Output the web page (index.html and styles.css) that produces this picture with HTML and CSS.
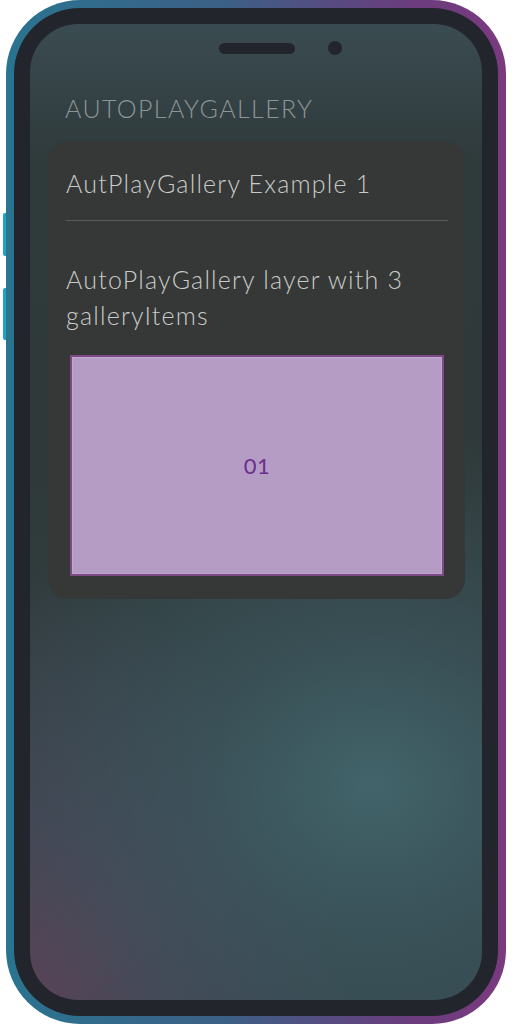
FILE: index.html
```html
<!DOCTYPE html>
<html>
<head>
<meta charset="utf-8">
<link rel="stylesheet" href="styles.css">
</head>
<body>
<div class="device">
  <div class="btn btn-a"></div>
  <div class="btn btn-b"></div>
  <div class="phone">
    <div class="frame">
      <div class="screen">
        <div class="sensors">
          <span></span>
          <span class="speaker"></span>
          <span class="camera"></span>
        </div>
        <h1 class="heading">AUTOPLAYGALLERY</h1>
        <section class="card">
          <h2 class="card-title">AutPlayGallery Example 1</h2>
          <hr class="divider">
          <p class="card-text">AutoPlayGallery layer with 3 galleryItems</p>
          <div class="gallery">
            <span class="gallery-label">01</span>
          </div>
        </section>
      </div>
    </div>
  </div>
</div>
</body>
</html>
```

FILE: styles.css
```css
* { box-sizing: border-box; }
html, body { margin: 0; padding: 0; background: #ffffff; }
body { width: 512px; height: 1024px; overflow: hidden; font-family: "Lato", "Noto Sans", sans-serif; }

.device { position: relative; width: 512px; height: 1024px; padding-left: 6px; }

.btn { position: absolute; left: 3px; width: 4px; background: #1ea2c9; border-radius: 2px 0 0 2px; }
.btn-a { top: 213px; height: 43px; }
.btn-b { top: 288px; height: 52px; }

.phone {
  position: relative;
  width: 500px;
  height: 1024px;
  padding: 8px;
  border-radius: 74px;
  background: linear-gradient(90deg, #2a7490 0%, #3d5f86 45%, #6a3d7e 80%, #7a3a7e 100%);
}

.frame {
  height: 100%;
  padding: 16px;
  border-radius: 66px;
  background: #22252c;
}

.screen {
  height: 100%;
  border-radius: 48px;
  padding: 17px 17px 0 18px;
  overflow: hidden;
  background:
    radial-gradient(ellipse 420px 360px at 76% 78%, rgba(66,102,108,0.95) 0%, rgba(62,92,100,0.6) 40%, rgba(50,64,66,0) 100%),
    radial-gradient(ellipse 320px 420px at 0% 100%, rgba(92,66,88,0.95) 0%, rgba(80,70,92,0.55) 45%, rgba(60,70,80,0) 100%),
    linear-gradient(180deg, #3a4b51 0%, #2f3a3b 14%, #2f3939 45%, #34444a 100%);
}

.sensors {
  display: grid;
  grid-template-columns: 1fr 76px 1fr;
  align-items: center;
  height: 14px;
}
.speaker { height: 11px; border-radius: 6px; background: #22252c; }
.camera { width: 14px; height: 14px; border-radius: 50%; background: #22252c; margin-left: 33px; }

.heading {
  margin: 38px 0 0 17px;
  font-size: 25px;
  line-height: 30px;
  font-weight: 300;
  color: #8d9597;
  letter-spacing: 1.4px;
}

.card {
  margin-top: 18px;
  background: #353837;
  border-radius: 20px;
  padding: 27px 17px 23px 18px;
}

.card-title {
  margin: 0;
  font-size: 25px;
  line-height: 30px;
  font-weight: 300;
  color: #c9cbca;
  letter-spacing: 1.2px;
}

.divider {
  margin: 22px 0 0 0;
  border: 0;
  height: 1px;
  background: #575b5a;
}

.card-text {
  margin: 40px 0 0 0;
  font-size: 25px;
  line-height: 36px;
  font-weight: 300;
  color: #c9cbca;
  letter-spacing: 1.2px;
}

.gallery {
  margin: 22px 4px 0 4px;
  height: 221px;
  border: 2px solid #7e4a86;
  box-shadow: inset 0 0 0 1px #c0a7cd;
  background: #b59cc5;
  display: flex;
  align-items: center;
  justify-content: center;
}

.gallery-label {
  font-size: 22px;
  font-weight: 400;
  color: #6a2e8e;
  letter-spacing: 0.5px;
  margin-top: -1px;
}
```
